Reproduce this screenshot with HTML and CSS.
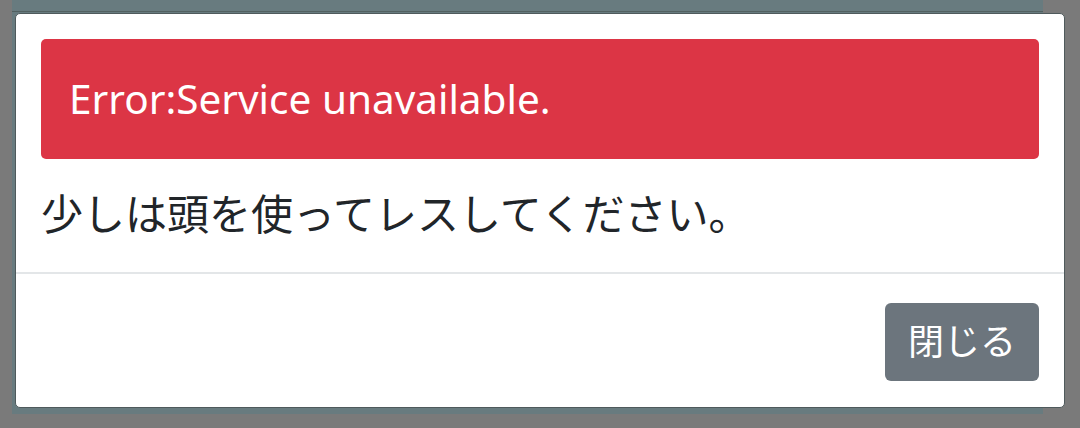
FILE: index.html
```html
<!DOCTYPE html>
<html lang="ja">
<head>
<meta charset="utf-8">
<title>Error</title>
<link rel="stylesheet" href="styles.css">
</head>
<body>
<div class="page">
  <div class="page-header"></div>
</div>
<div class="modal" role="dialog">
  <div class="modal-body">
    <div class="alert">Error:Service unavailable.</div>
    <p class="message">少しは頭を使ってレスしてください。</p>
  </div>
  <div class="modal-footer">
    <button class="btn" type="button">閉じる</button>
  </div>
</div>
</body>
</html>
```

FILE: styles.css
```css
html, body {
  margin: 0;
  height: 100%;
  overflow: hidden;
}
body {
  background: #7a7a7a;
  font-family: "Noto Sans", "Noto Sans CJK JP", sans-serif;
}
.page {
  margin-left: 12px;
  width: 1031px;
  height: 414px;
  background: #687b7f;
}
.page-header {
  height: 11px;
  border-bottom: 1px solid #526060;
}
.modal {
  position: fixed;
  top: 13px;
  left: 15px;
  width: 1050px;
  box-sizing: border-box;
  background: #fff;
  border: 1px solid #4f5a5c;
  border-radius: 5px;
}
.modal-body {
  padding: 25px 25px 28px;
}
.alert {
  background: #dc3545;
  color: #fff;
  font-size: 40.5px;
  line-height: 60px;
  padding: 30px 28px;
  border-radius: 5px;
  margin-bottom: 25px;
}
.message {
  margin: 0;
  font-size: 42px;
  line-height: 60px;
  color: #212529;
}
.modal-footer {
  border-top: 2px solid #e3e6e8;
  padding: 29px 25px 26px;
  display: flex;
  justify-content: flex-end;
}
.btn {
  font-family: inherit;
  font-size: 36px;
  line-height: 60px;
  width: 154px;
  padding: 9px 0;
  text-align: center;
  color: #fff;
  background: #6c757d;
  border: 0;
  border-radius: 6px;
}
```
